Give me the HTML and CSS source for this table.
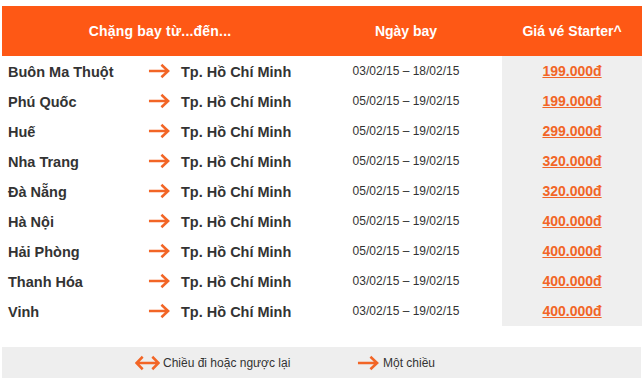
FILE: index.html
```html
<!DOCTYPE html>
<html lang="vi">
<head>
<meta charset="utf-8">
<link rel="stylesheet" href="styles.css">
</head>
<body>
<div class="wrap">
  <div class="head">
    <div class="h-route">Chặng bay từ...đến...</div>
    <div class="h-date">Ngày bay</div>
    <div class="h-price">Giá vé Starter^</div>
  </div>
  <div class="body">
    <div class="rows">
      <div class="row"><span class="from">Buôn Ma Thuột</span><svg class="arr" viewBox="0 0 24 16"><path d="M1 8H21M14 1.5L21 8L14 14.5"/></svg><span class="to">Tp. Hồ Chí Minh</span><span class="date">03/02/15 – 18/02/15</span><span class="price"><a>199.000đ</a></span></div>
      <div class="row"><span class="from">Phú Quốc</span><svg class="arr" viewBox="0 0 24 16"><path d="M1 8H21M14 1.5L21 8L14 14.5"/></svg><span class="to">Tp. Hồ Chí Minh</span><span class="date">05/02/15 – 19/02/15</span><span class="price"><a>199.000đ</a></span></div>
      <div class="row"><span class="from">Huế</span><svg class="arr" viewBox="0 0 24 16"><path d="M1 8H21M14 1.5L21 8L14 14.5"/></svg><span class="to">Tp. Hồ Chí Minh</span><span class="date">05/02/15 – 19/02/15</span><span class="price"><a>299.000đ</a></span></div>
      <div class="row"><span class="from">Nha Trang</span><svg class="arr" viewBox="0 0 24 16"><path d="M1 8H21M14 1.5L21 8L14 14.5"/></svg><span class="to">Tp. Hồ Chí Minh</span><span class="date">05/02/15 – 19/02/15</span><span class="price"><a>320.000đ</a></span></div>
      <div class="row"><span class="from">Đà Nẵng</span><svg class="arr" viewBox="0 0 24 16"><path d="M1 8H21M14 1.5L21 8L14 14.5"/></svg><span class="to">Tp. Hồ Chí Minh</span><span class="date">05/02/15 – 19/02/15</span><span class="price"><a>320.000đ</a></span></div>
      <div class="row"><span class="from">Hà Nội</span><svg class="arr" viewBox="0 0 24 16"><path d="M1 8H21M14 1.5L21 8L14 14.5"/></svg><span class="to">Tp. Hồ Chí Minh</span><span class="date">05/02/15 – 19/02/15</span><span class="price"><a>400.000đ</a></span></div>
      <div class="row"><span class="from">Hải Phòng</span><svg class="arr" viewBox="0 0 24 16"><path d="M1 8H21M14 1.5L21 8L14 14.5"/></svg><span class="to">Tp. Hồ Chí Minh</span><span class="date">05/02/15 – 19/02/15</span><span class="price"><a>400.000đ</a></span></div>
      <div class="row"><span class="from">Thanh Hóa</span><svg class="arr" viewBox="0 0 24 16"><path d="M1 8H21M14 1.5L21 8L14 14.5"/></svg><span class="to">Tp. Hồ Chí Minh</span><span class="date">03/02/15 – 19/02/15</span><span class="price"><a>400.000đ</a></span></div>
      <div class="row"><span class="from">Vinh</span><svg class="arr" viewBox="0 0 24 16"><path d="M1 8H21M14 1.5L21 8L14 14.5"/></svg><span class="to">Tp. Hồ Chí Minh</span><span class="date">03/02/15 – 19/02/15</span><span class="price"><a>400.000đ</a></span></div>
    </div>
  </div>
  <div class="legend">
    <span class="leg-item leg-both"><svg class="arr2" viewBox="0 0 26 16"><path d="M2 8H24M8 1.5L1.5 8L8 14.5M18 1.5L24.5 8L18 14.5"/></svg>Chiều đi hoặc ngược lại</span>
    <span class="leg-item leg-one"><svg class="arr" viewBox="0 0 24 16"><path d="M1 8H21M14 1.5L21 8L14 14.5"/></svg>Một chiều</span>
  </div>
</div>
</body>
</html>
```

FILE: styles.css
```css
html, body {
  margin: 0;
  padding: 0;
  background: #ffffff;
}
body {
  font-family: "Liberation Sans", Arial, sans-serif;
  color: #333333;
}
.wrap {
  padding: 6px 2px 0 2px;
  width: 640px;
}
.head {
  display: grid;
  grid-template-columns: 308px 192px 140px;
  height: 50px;
  background: #fe5815;
  color: #ffffff;
  font-weight: bold;
  font-size: 14px;
  align-items: center;
  text-align: center;
}
.h-route {
  padding-left: 8px;
  letter-spacing: 0.2px;
}
.rows {
  display: flex;
  flex-direction: column;
}
.row {
  display: grid;
  grid-template-columns: 146px 33px 129px 192px 140px;
  height: 30px;
  align-items: center;
}
.from, .to {
  font-weight: bold;
  font-size: 14.5px;
  color: #333333;
  padding-top: 1px;
}
.from {
  padding-left: 6px;
}
.arr {
  width: 23px;
  height: 16px;
  fill: none;
  stroke: #f26526;
  stroke-width: 2.6;
}
.date {
  font-size: 12px;
  text-align: center;
  color: #333333;
}
.price {
  background: #efefef;
  height: 30px;
  display: flex;
  align-items: center;
  justify-content: center;
}
.price a {
  color: #f26526;
  font-weight: bold;
  font-size: 14px;
  text-decoration: underline;
}
.legend {
  margin-top: 21px;
  height: 31px;
  width: 639px;
  background: #eeeeee;
  display: grid;
  grid-template-columns: 133px 222px 1fr;
  align-items: center;
  font-size: 12px;
  color: #333333;
}
.leg-item {
  display: flex;
  align-items: center;
}
.leg-both {
  grid-column: 2;
}
.leg-one {
  grid-column: 3;
}
.arr2 {
  width: 25px;
  height: 16px;
  fill: none;
  stroke: #f26526;
  stroke-width: 2.6;
  margin-right: 3px;
}
.leg-one .arr {
  margin-right: 3px;
}
```
